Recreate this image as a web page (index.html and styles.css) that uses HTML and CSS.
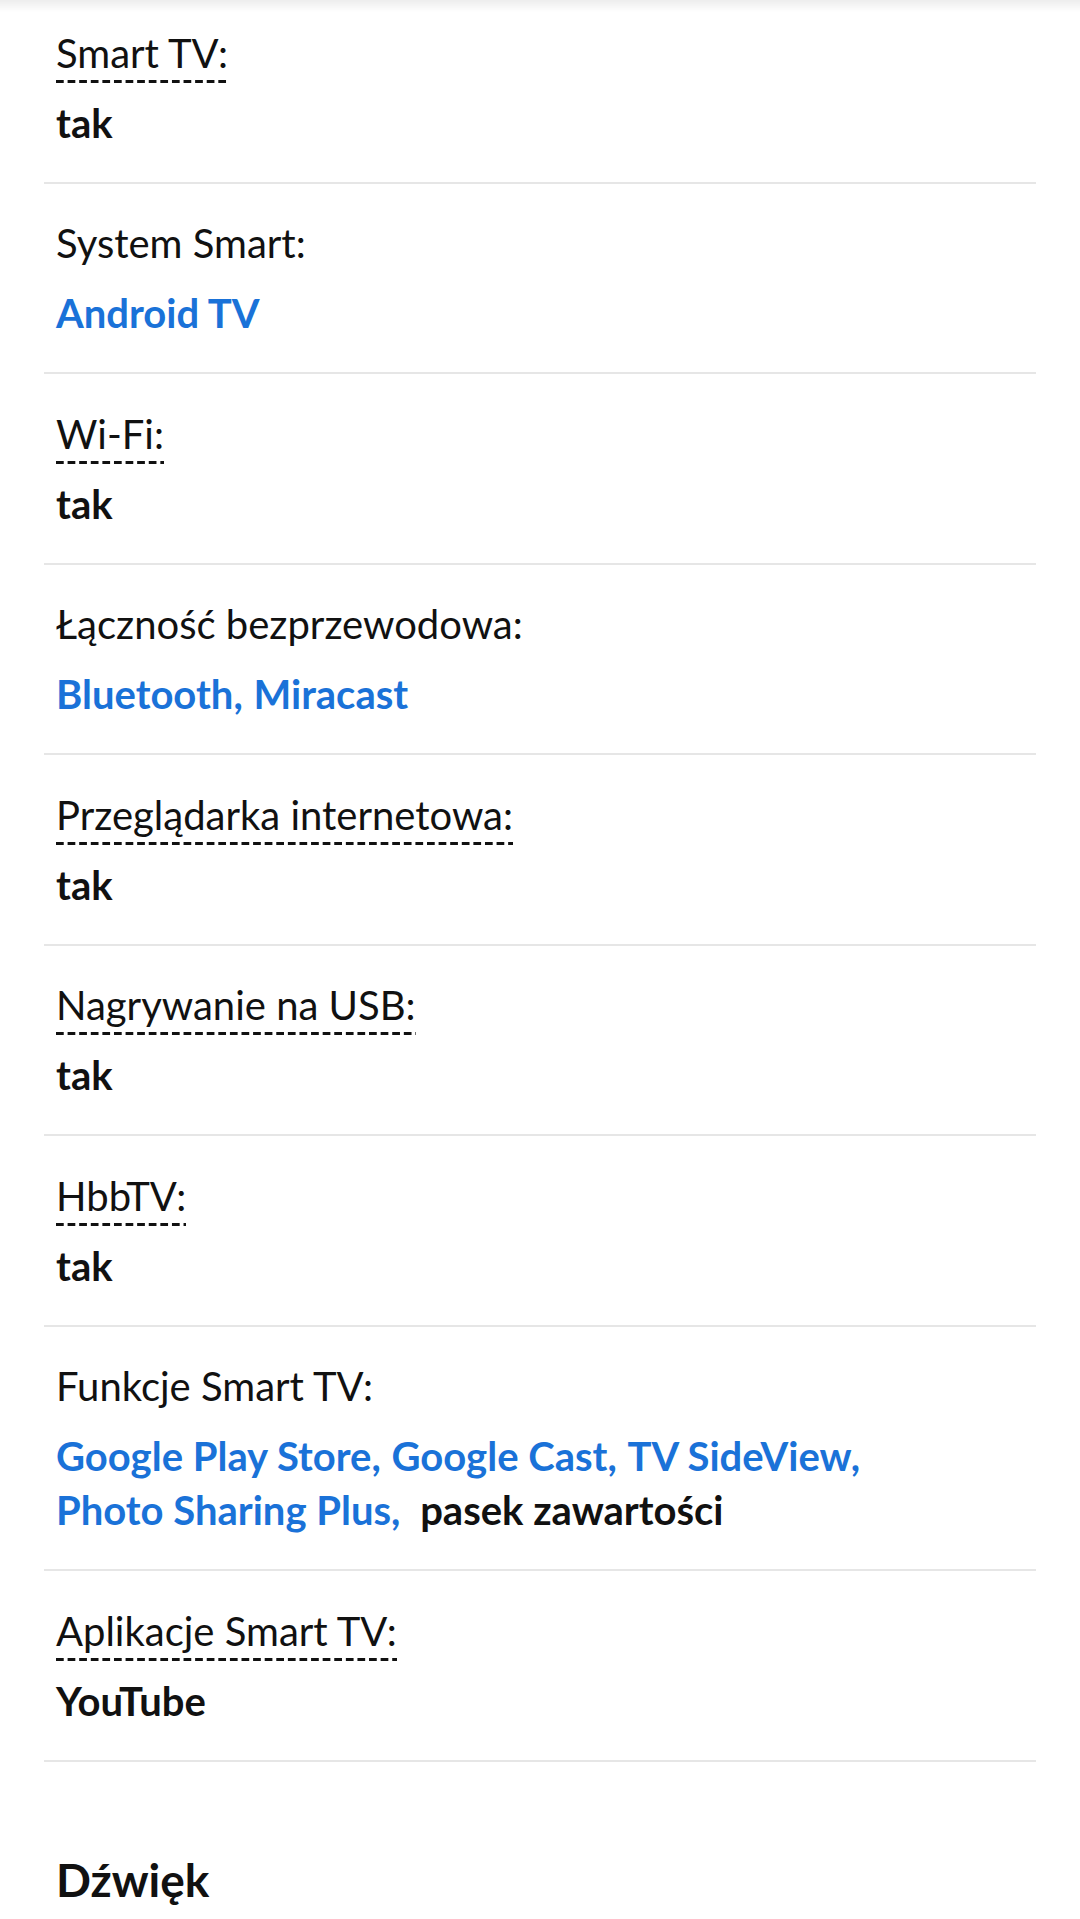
FILE: index.html
```html
<!DOCTYPE html>
<html lang="pl">
<head>
  <meta charset="UTF-8" />
  <meta name="viewport" content="width=device-width, initial-scale=1.0"/>
  <title>Specyfikacja</title>
  <link rel="stylesheet" href="styles.css">
</head>
<body>

  <div class="top-shadow"></div>

  <div class="specs">
    <div class="spec">
      <div class="spec-label"><span class="hint">Smart TV:</span></div>
      <div class="spec-value">tak</div>
    </div>

    <div class="spec">
      <div class="spec-label">System Smart:</div>
      <div class="spec-value"><a class="link" href="#">Android TV</a></div>
    </div>

    <div class="spec">
      <div class="spec-label"><span class="hint">Wi-Fi:</span></div>
      <div class="spec-value">tak</div>
    </div>

    <div class="spec">
      <div class="spec-label">Łączność bezprzewodowa:</div>
      <div class="spec-value">
        <a class="link item" href="#">Bluetooth,</a>
        <a class="link item" href="#">Miracast</a>
      </div>
    </div>

    <div class="spec">
      <div class="spec-label"><span class="hint">Przeglądarka internetowa:</span></div>
      <div class="spec-value">tak</div>
    </div>

    <div class="spec">
      <div class="spec-label"><span class="hint">Nagrywanie na USB:</span></div>
      <div class="spec-value">tak</div>
    </div>

    <div class="spec">
      <div class="spec-label"><span class="hint">HbbTV:</span></div>
      <div class="spec-value">tak</div>
    </div>

    <div class="spec">
      <div class="spec-label">Funkcje Smart TV:</div>
      <div class="spec-value">
        <a class="link item" href="#">Google Play Store,</a>
        <a class="link item" href="#">Google Cast,</a>
        <a class="link item" href="#">TV SideView,</a>
        <a class="link item" href="#">Photo Sharing Plus,</a>
        <span class="item plain">pasek zawartości</span>
      </div>
    </div>

    <div class="spec">
      <div class="spec-label"><span class="hint">Aplikacje Smart TV:</span></div>
      <div class="spec-value">YouTube</div>
    </div>
  </div>

  <h2 class="section-title">Dźwięk</h2>

</body>
</html>
```

FILE: styles.css
```css
body {
  margin: 0;
  font-family: 'Lato', 'Noto Sans', sans-serif;
  background: #fff;
  color: #111;
}

.top-shadow {
  position: absolute;
  top: 0;
  left: 0;
  right: 0;
  height: 12px;
  background: linear-gradient(to bottom, rgba(0, 0, 0, 0.07), rgba(0, 0, 0, 0));
}

.specs {
  margin: 0 44px;
}

.spec {
  padding: 33.5px 12px 32px;
  border-bottom: 2px solid #e6e6e6;
}

.spec:first-child {
  padding-top: 26.5px;
}

.spec-label {
  font-size: 40px;
  line-height: 52px;
  margin-bottom: 17px;
}

/* dashed hint underline */
.hint {
  padding-bottom: 6px;
  background: linear-gradient(to right, #111 7.5px, transparent 7.5px) 0 100% / 11.6px 3px repeat-x;
}

.spec-value {
  font-size: 40px;
  line-height: 54px;
  font-weight: 700;
}

.link {
  color: #1a72d8;
  text-decoration: none;
}

.item {
  display: inline-block;
  margin-right: 1px;
}

.item.plain {
  margin-left: 9px;
}

.section-title {
  margin: 89px 44px 0;
  padding: 0 12px;
  font-size: 46px;
  line-height: 58px;
  font-weight: 700;
}
```
